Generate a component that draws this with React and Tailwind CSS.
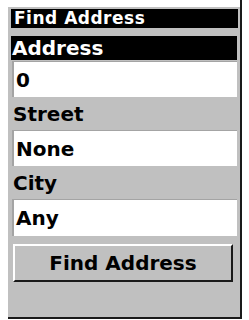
const font = { fontFamily: '"DejaVu Sans", Verdana, sans-serif' };

function Label({ children }) {
  return (
    <div className="flex h-[33px] items-center pl-[2px] pt-[1px] text-[20px] font-bold leading-none text-black">
      {children}
    </div>
  );
}

function Field({ value, className = "" }) {
  return (
    <div
      className={`mr-[1px] ml-[1px] flex h-[36px] items-center border-l-2 border-t border-[#a4a4a4] bg-white pl-[2px] text-[20px] font-bold leading-none text-black ${className}`}
    >
      {value}
    </div>
  );
}

export default function App() {
  return (
    <div className="h-[320px] w-[249px] overflow-hidden bg-white" style={font}>
      <div className="ml-[8px] flex h-[319px] w-[234px] flex-col border-b-2 border-r-2 border-[#1a1a1a]">
        <div className="h-[7px] bg-white" />
        <div className="flex flex-1 flex-col bg-[#c0c0c0] pl-[3px] pr-[2px] pt-[2px]">
          <div className="flex h-[19px] items-center bg-black pl-[3px] text-[17px] font-bold leading-none tracking-[0.5px] text-white">
            Find Address
          </div>
          <div className="mr-[1px] mt-[8px] flex h-[24px] items-center bg-black pl-[1px] text-[20px] font-bold leading-none text-white">
            Address
          </div>
          <Field value="0" className="mt-[1px]" />
          <Label>Street</Label>
          <Field value="None" />
          <Label>City</Label>
          <Field value="Any" className="h-[37px]" />
          <button
            type="button"
            className="ml-[2px] mr-[5px] mt-[8px] flex h-[38px] items-center justify-center border-2 border-b-[#1a1a1a] border-l-white border-r-[#1a1a1a] border-t-white bg-[#c0c0c0] text-[20px] font-bold leading-none text-black"
          >
            Find Address
          </button>
        </div>
      </div>
    </div>
  );
}
